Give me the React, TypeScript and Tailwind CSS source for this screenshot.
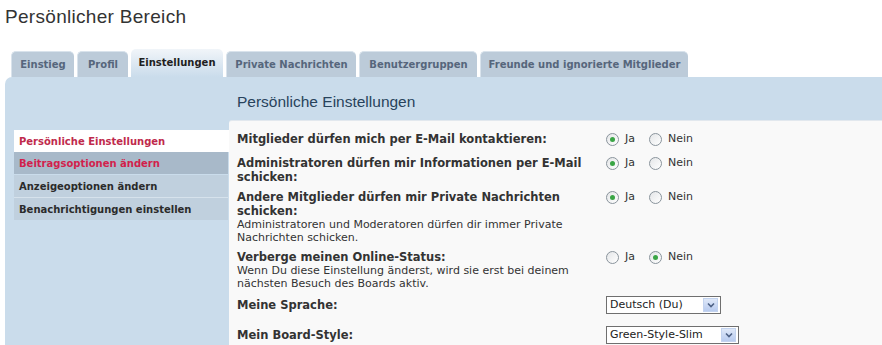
import React from "react";

const tabs = [
  { label: "Einstieg", w: "w-[63px]" },
  { label: "Profil", w: "w-[51px]" },
  { label: "Einstellungen", w: "w-[92px]", active: true },
  { label: "Private Nachrichten", w: "w-[130px]" },
  { label: "Benutzergruppen", w: "w-[118px]" },
  { label: "Freunde und ignorierte Mitglieder", w: "w-[208px]" },
];

function Radio({ checked }: { checked?: boolean }) {
  return (
    <span className="relative inline-flex w-[13px] h-[13px] rounded-full border border-[#8a949c] bg-gradient-to-br from-[#e4e6e8] to-white items-center justify-center shrink-0">
      {checked && <span className="w-[5px] h-[5px] rounded-full bg-[#3aa545]" />}
    </span>
  );
}

function YesNo({ yes }: { yes: boolean }) {
  return (
    <div className="flex items-center h-[14px] text-[11px] leading-[14px] text-[#333]">
      <Radio checked={yes} />
      <span className="ml-[6px] w-[18px]">Ja</span>
      <span className="ml-[6px] flex"><Radio checked={!yes} /></span>
      <span className="ml-[6px]">Nein</span>
    </div>
  );
}

function Select({ value, w }: { value: string; w: string }) {
  return (
    <div className={`flex items-center h-[18px] border border-[#6f6f6f] bg-white ${w}`}>
      <span className="flex-1 pl-[3px] text-[11px] leading-[14px] text-[#222] whitespace-nowrap">{value}</span>
      <span className="w-[15px] h-[14px] mr-[2px] bg-gradient-to-b from-[#dfe8f8] to-[#b8cbef] border border-[#c3d3ef] flex items-center justify-center">
        <svg width="8" height="6" viewBox="0 0 8 6">
          <path d="M1 1.5 L4 4.5 L7 1.5" fill="none" stroke="#4d6185" strokeWidth="1.6" />
        </svg>
      </span>
    </div>
  );
}

const label = "w-[369px] text-[11.5px] leading-[14px] font-bold text-[#333]";
const desc = "text-[11px] leading-[13px] text-[#333]";

export default function App() {
  return (
    <div className="w-[882px] h-[345px] overflow-hidden bg-white font-['DejaVu_Sans',sans-serif]">
      <h2 className="pl-[5px] pt-[6px] h-[49px] text-[19px] leading-[22px] text-[#333] font-['Liberation_Sans',sans-serif] tracking-[0.3px]">
        Persönlicher Bereich
      </h2>
      <div className="flex items-end gap-[3px] pl-[11px] h-[28px]">
        {tabs.map((t) =>
          t.active ? (
            <div
              key={t.label}
              className={`${t.w} h-[28px] rounded-t-[5px] bg-gradient-to-b from-[#f1f5f9] to-[#cadceb] flex items-center justify-center pb-[1px] text-[10px] font-bold text-[#1f1f1f]`}
            >
              {t.label}
            </div>
          ) : (
            <div
              key={t.label}
              className={`${t.w} h-[26px] rounded-t-[5px] bg-[#bccbd9] border-t border-l border-[#d9e3ec] flex items-center justify-center text-[10px] font-bold text-[#56667c] whitespace-nowrap`}
            >
              {t.label}
            </div>
          )
        )}
      </div>
      <div className="ml-[5px] h-[268px] bg-[#cadceb] rounded-tl-[7px] flex">
        <div className="w-[224px] shrink-0 flex pt-[53px]">
          <div className="w-[9px]" />
          <div className="flex-1 text-[10px] font-bold">
            <div className="h-[22px] bg-white pl-[5px] flex items-center text-[#bf2a4c]">Persönliche Einstellungen</div>
            <div className="h-[22px] bg-[#a8b9c9] pl-[5px] flex items-center text-[#d21f4c] mr-[1px]">Beitragsoptionen ändern</div>
            <div className="h-[23px] bg-[#c0d0de] pl-[5px] flex items-center text-[#2b2b2b] mt-[1px] mr-[1px] border-b border-[#d6e2ec]">Anzeigeoptionen ändern</div>
            <div className="h-[22px] bg-[#c0d0de] pl-[5px] flex items-center text-[#2b2b2b] mr-[1px]">Benachrichtigungen einstellen</div>
          </div>
        </div>
        <div className="flex-1 flex flex-col">
          <h3 className="h-[43px] pl-[8px] pt-[16px] text-[15.5px] leading-[18px] text-[#28435c] font-['Liberation_Sans',sans-serif]">
            Persönliche Einstellungen
          </h3>
          <div className="flex-1 bg-[#f9f9f9] border-t border-[#e2e8ee] rounded-tl-[3px] pl-[8px] pt-[11px] text-[#333]">
            <div className="flex items-start">
              <div className={label}>Mitglieder dürfen mich per E-Mail kontaktieren:</div>
              <YesNo yes />
            </div>
            <div className="flex items-start mt-[10px]">
              <div className={label}>
                Administratoren dürfen mir Informationen per E-Mail<br />schicken:
              </div>
              <YesNo yes />
            </div>
            <div className="flex items-start mt-[6px]">
              <div className="w-[369px]">
                <div className={label}>
                  Andere Mitglieder dürfen mir Private Nachrichten<br />schicken:
                </div>
                <div className={desc}>
                  Administratoren und Moderatoren dürfen dir immer Private<br />Nachrichten schicken.
                </div>
              </div>
              <YesNo yes />
            </div>
            <div className="flex items-start mt-[6px]">
              <div className="w-[369px]">
                <div className={label}>Verberge meinen Online-Status:</div>
                <div className={desc}>
                  Wenn Du diese Einstellung änderst, wird sie erst bei deinem<br />nächsten Besuch des Boards aktiv.
                </div>
              </div>
              <YesNo yes={false} />
            </div>
            <div className="flex items-center mt-[6px]">
              <div className={label}>Meine Sprache:</div>
              <Select value="Deutsch (Du)" w="w-[115px]" />
            </div>
            <div className="flex items-center mt-[12px]">
              <div className={label}>Mein Board-Style:</div>
              <Select value="Green-Style-Slim" w="w-[133px]" />
            </div>
          </div>
        </div>
      </div>
    </div>
  );
}
